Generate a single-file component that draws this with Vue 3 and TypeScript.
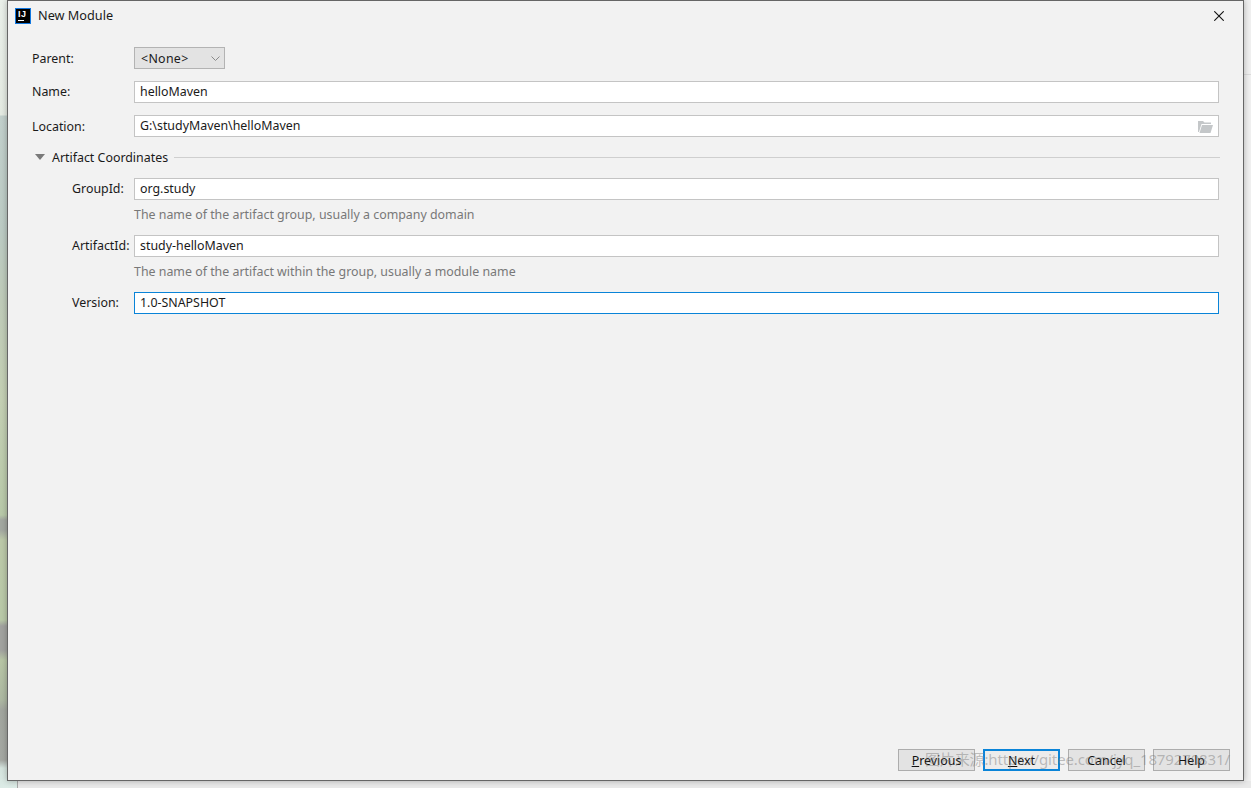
<script setup lang="ts">
interface Field { label: string; value: string; hint?: string; focused?: boolean }
const fields: Field[] = [
  { label: 'GroupId:', value: 'org.study', hint: 'The name of the artifact group, usually a company domain' },
  { label: 'ArtifactId:', value: 'study-helloMaven', hint: 'The name of the artifact within the group, usually a module name' },
  { label: 'Version:', value: '1.0-SNAPSHOT', focused: true },
]
</script>

<template>
  <div class="screen">
    <div class="dialog">
      <header class="titlebar">
        <div class="logo"><span class="logo-text">IJ</span><span class="logo-bar"></span></div>
        <span class="title">New Module</span>
        <svg class="close" width="10" height="10" viewBox="0 0 10 10"><path d="M.3.3l9.400 9.400M9.700.3L.3 9.700" stroke="#111" stroke-width="1.1" fill="none"/></svg>
      </header>

      <main class="form">
        <div class="row parent-row">
          <label class="label">Parent:</label>
          <div class="select"><span class="select-value">&lt;None&gt;</span>
            <svg width="9" height="5" viewBox="0 0 9 5"><path d="M.5.5l4 4 4-4" stroke="#8a8a8a" fill="none"/></svg>
          </div>
        </div>
        <div class="row name-row">
          <label class="label raised">Name:</label>
          <div class="input">helloMaven</div>
        </div>
        <div class="row location-row">
          <label class="label">Location:</label>
          <div class="input">G:\studyMaven\helloMaven<svg class="folder" width="15" height="12" viewBox="0 0 15 12"><path d="M0 0h5l1.500 1.500H13V3H3.500L1 11H0z" fill="#c4c7c9"/><path d="M4 4h11l-2.500 8H1.500z" fill="#c4c7c9"/></svg></div>
        </div>
        <div class="group-head">
          <svg width="10" height="6" viewBox="0 0 10 6"><path d="M0 0h10L5 6z" fill="#7a7a7a"/></svg>
          <span>Artifact Coordinates</span>
          <i class="rule"></i>
        </div>
        <div class="group">
          <div v-for="f in fields" :key="f.label" class="field">
            <div class="row">
              <label class="label sub raised">{{ f.label }}</label>
              <div class="input" :class="{ focused: f.focused }">{{ f.value }}</div>
            </div>
            <p v-if="f.hint" class="hint">{{ f.hint }}</p>
          </div>
        </div>
      </main>

      <footer class="buttons">
        <button class="btn"><u>P</u>revious</button>
        <button class="btn primary"><u>N</u>ext</button>
        <button class="btn">Cancel</button>
        <button class="btn">Help</button>
      </footer>
      <div class="watermark">图片来源:https://gitee.com/jyq_1879270831/</div>
    </div>
  </div>
</template>

<style>
html, body { margin: 0; padding: 0; background: #f0f0f0; overflow: hidden; }
</style>

<style scoped>
.screen {
  width: 1251px; height: 788px; box-sizing: border-box; padding: 0 7px 7px 7px; overflow: hidden;
  font-family: "Noto Sans", "Open Sans", "Noto Sans CJK SC", sans-serif; font-size: 12.4px; color: #1a1a1a;
  background:
    linear-gradient(#dcdcdc, #dcdcdc) right 0 top 74px / 7px 1px no-repeat,
    linear-gradient(#a8a8a8, #a8a8a8) 17px bottom / 1px 7px no-repeat,
    linear-gradient(#e9e9e9, #e9e9e9) right bottom / 1233px 7px no-repeat,
    linear-gradient(#f0f0f0, #f0f0f0) right top / 7px 100% no-repeat,
    linear-gradient(180deg, #eaf0ea 0, #e4eae2 115px, #c2d0cc 116px, #bccbc4 230px, #bfcbb9 300px, #c4d0b4 400px, #b8c9a9 515px, #a3a8a1 520px, #a3a8a1 530px, #bcc9a9 540px, #b9c9a8 620px, #a2a3a0 626px, #a2a3a0 650px, #b8c6a6 660px, #adb8a2 700px, #a2a69f 710px, #a5a8a3 760px, #d5e4de 768px, #dcebe6 788px);
}
.dialog {
  position: relative; box-sizing: border-box; height: 781px; width: 1237px;
  background: #f2f2f2; border: 1px solid #666;
  box-shadow: 0 0 6px rgba(0, 0, 0, .28);
  display: flex; flex-direction: column;
}
.titlebar { display: flex; align-items: center; height: 29px; padding: 0 19px 0 7px; flex: none; }
.logo { width: 16px; height: 16px; box-sizing: border-box; background: #000; border: 1px solid #1278e0; position: relative; color: #fff; margin-right: 7px; flex: none; }
.logo-text { position: absolute; left: 2px; top: 1px; font: bold 9px/9px "Liberation Sans", sans-serif; letter-spacing: .5px; }
.logo-bar { position: absolute; left: 2px; bottom: 2px; width: 6px; height: 1px; background: #fff; }
.title { flex: 1; font-size: 12.7px; padding-bottom: 2px; }
.close { flex: none; }
.form { flex: 1; padding: 17px 24px 0 24px; }
.row { display: flex; align-items: center; }
.label { width: 102px; flex: none; }
.label.raised { padding-bottom: 2px; }
.parent-row { height: 22px; }
.name-row { margin-top: 12px; }
.location-row { margin-top: 12px; }
.select {
  box-sizing: border-box; width: 91px; height: 22px; background: #e3e3e3; border: 1px solid #b3b3b3;
  display: flex; align-items: center; justify-content: space-between; padding: 0 4px 0 6px;
}
.select-value { letter-spacing: .3px; }
.input {
  flex: 1; box-sizing: border-box; height: 22px; background: #fff; border: 1px solid #c4c4c4;
  padding: 0 5px; line-height: 20px; position: relative; white-space: pre;
}
.input.focused { border-color: #0a84d8; }
.folder { position: absolute; right: 5px; top: 5px; }
.group-head { display: flex; align-items: center; height: 18px; margin-top: 11px; padding-left: 3px; }
.group-head span { margin-left: 7px; }
.rule { flex: 1; height: 1px; background: #cfcfcf; margin-left: 6px; margin-right: -1px; }
.group { padding-left: 40px; margin-top: 12px; }
.sub { width: 62px; }
.field { min-height: 22px; }
.hint { margin: 7px 0 12px 62px; height: 16px; line-height: 16px; color: #787878; }
.buttons { position: absolute; right: 13px; bottom: 9px; display: flex; gap: 8px; }
.btn {
  box-sizing: border-box; width: 77px; height: 22px; padding: 0; background: #e3e3e3; border: 1px solid #adadad;
  font: inherit; color: #111;
}
.btn.primary { border: 2px solid #0a84d8; background: #ececec; }
.watermark {
  position: absolute; left: 917px; top: 748px; font-size: 15px; line-height: 20px; letter-spacing: -.13px; color: rgba(120,120,120,.45);
  white-space: nowrap; pointer-events: none;
}
</style>
